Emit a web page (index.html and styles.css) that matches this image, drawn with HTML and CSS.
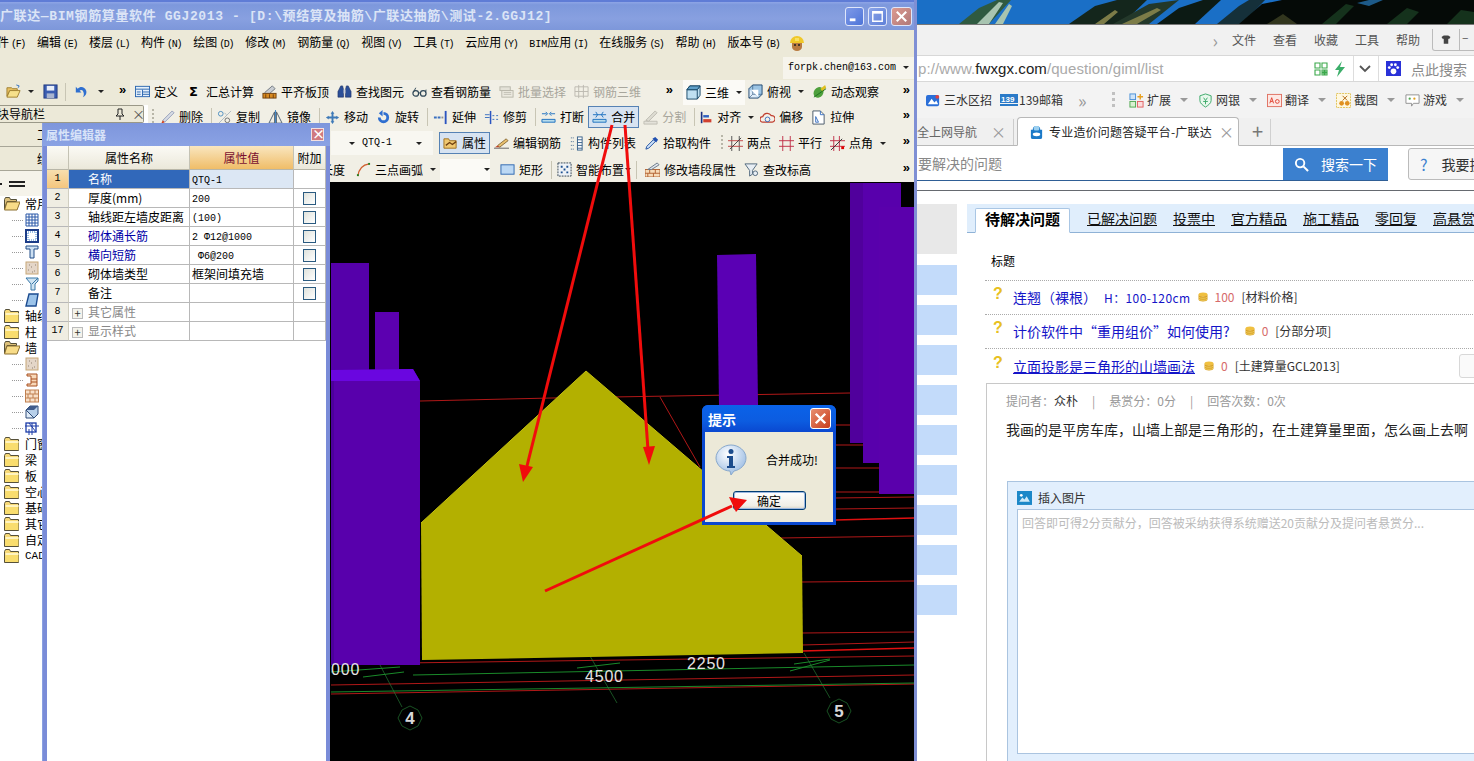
FILE: index.html
```html
<!DOCTYPE html>
<html lang="zh-CN">
<head>
<meta charset="utf-8">
<title>广联达 BIM钢筋算量软件 GGJ2013</title>
<link rel="stylesheet" href="styles.css">
</head>
<body>
<svg class="defs" aria-hidden="true">
  <symbol id="open" viewBox="0 0 16 16"><path d="M1 4h5l1 1h5v2H4L1 13z" fill="#e8c060" stroke="#a08030"/><path d="M4 7h11l-3 7H1z" fill="#f6e08a" stroke="#a08030"/><path d="M11 1l3 1-1 2" fill="none" stroke="#3070c0"/></symbol>
  <symbol id="save" viewBox="0 0 16 16"><rect x="1" y="1" width="14" height="14" fill="#3a5cb0" stroke="#223a80"/><rect x="4" y="2" width="8" height="5" fill="#e8eefa"/><rect x="4" y="10" width="8" height="5" fill="#a8b4d0"/></symbol>
  <symbol id="undo" viewBox="0 0 16 16"><path d="M3 3v6h6L7 7c2-1.500 4-.5 4.500 3 .2 1-.2 3-1 4 3-1 4.500-4 3.500-7C12.500 3 8 2 5 5z" fill="#2f6fd0"/></symbol>
  <symbol id="def" viewBox="0 0 16 16"><rect x=".5" y="2.500" width="15" height="11" fill="#e6f0fb" stroke="#2c66b0"/><path d="M1 5.500h14M8 6v7M8 8.500h7M8 11h7M2 8.500h4M2 11h4" stroke="#2c66b0"/></symbol>
  <symbol id="flush" viewBox="0 0 16 16"><path d="M3 9l8-7 3 3-8 7z" fill="#c8ccd2" stroke="#707880"/><rect x="1" y="10" width="14" height="5" fill="#d88a20" stroke="#704010"/><path d="M4 11v4M8 11v4M12 11v4" stroke="#704010"/></symbol>
  <symbol id="binoc" viewBox="0 0 16 16"><path d="M2 6l2-4h2l1 4v8H1V8zM14 6l-2-4h-2L9 6v8h6V8z" fill="#2c4f98" stroke="#1c2f60" stroke-width=".6"/><rect x="7" y="6" width="2" height="4" fill="#c8d0e0"/></symbol>
  <symbol id="specs" viewBox="0 0 16 16"><circle cx="4" cy="10" r="3" fill="none" stroke="#304858" stroke-width="1.300"/><circle cx="12" cy="10" r="3" fill="none" stroke="#304858" stroke-width="1.300"/><path d="M7 9.500h2M1.500 9L4 4M14.500 9L15 6" stroke="#304858"/></symbol>
  <symbol id="batch" viewBox="0 0 16 16"><rect x="1" y="3" width="11" height="4" fill="#e4e2d8" stroke="#b8b6aa"/><rect x="3" y="7" width="12" height="7" fill="#eceae0" stroke="#b8b6aa"/><path d="M5 9h8M5 11h8" stroke="#c0beb2"/></symbol>
  <symbol id="grid3d" viewBox="0 0 16 16"><path d="M1 3h14v10H1zM5 1v14M10 1v14M1 8h14" fill="none" stroke="#bcbab0"/></symbol>
  <symbol id="cube" viewBox="0 0 16 16"><path d="M1 5l3-4h11v10l-3 4H1z" fill="#bfe0f2" stroke="#184868"/><path d="M1 5h11v10M12 5l3-4" fill="none" stroke="#184868"/><path d="M1 5l3-4h11l-3 4z" fill="#5f9fc8" stroke="#184868"/></symbol>
  <symbol id="cubeglass" viewBox="0 0 16 16"><path d="M1 5h10v10H1z" fill="#e0eefa" stroke="#204870"/><path d="M1 5l4-4h10v10l-4 4" fill="#9cc4e4" stroke="#204870"/><path d="M5 1v10H15M1 15l4-4" fill="none" stroke="#204870" stroke-width=".6"/><path d="M3 6h8v8z" fill="#fff"/></symbol>
  <symbol id="orbit" viewBox="0 0 16 16"><ellipse cx="7" cy="9" rx="5" ry="6" fill="#4ea03c" transform="rotate(35 7 9)"/><path d="M9 5l5-4 1 3-4 4z" fill="#e0c020"/><path d="M2 14l13-9" stroke="#207020"/></symbol>
  <symbol id="pen" viewBox="0 0 16 16"><path d="M3 11L13 1l2 2L5 13z" fill="#d8dce4" stroke="#6070a0" stroke-width=".6"/><path d="M1 15l2-4 2 2z" fill="#d04020"/></symbol>
  <symbol id="copy" viewBox="0 0 16 16"><circle cx="4" cy="4" r="2.500" fill="none" stroke="#5090c0"/><circle cx="11" cy="11" r="2.500" fill="none" stroke="#707070"/><path d="M1 15L15 1M8 3l2 2" stroke="#90a0b0" stroke-width=".7"/></symbol>
  <symbol id="mirror" viewBox="0 0 16 16"><path d="M7 2v12H1zM9 2v12h6z" fill="none" stroke="#506070"/><path d="M8 0v16" stroke="#3a80c0"/></symbol>
  <symbol id="move" viewBox="0 0 16 16"><path d="M8 1l2 3H9v3h3V6l3 2-3 2V9H9v3h1l-2 3-2-3h1V9H4v1L1 8l3-2v1h3V4H6z" fill="#3f7ab8"/></symbol>
  <symbol id="rotate" viewBox="0 0 16 16"><path d="M8 2a6 6 0 1 1-6 6h3a3 3 0 1 0 3-3V2z" fill="#2f6fd0"/><path d="M7 0v7L3 3.500z" fill="#2f6fd0"/></symbol>
  <symbol id="extend" viewBox="0 0 16 16"><path d="M13.500 1v14" stroke="#2c55c0" stroke-width="2"/><path d="M1 8h3M5 8h3" stroke="#3a70c0" stroke-width="2"/><path d="M9 8h2" stroke="#909090" stroke-width="2"/></symbol>
  <symbol id="trim" viewBox="0 0 16 16"><path d="M7 1v14" stroke="#2c55c0" stroke-width="1.600"/><path d="M1 8h5M1 5h5M9 6h2M9 10h2M13 6h2M13 10h2" stroke="#3a70c0"/></symbol>
  <symbol id="breakb" viewBox="0 0 16 16"><path d="M1 4h5M10 4h5M5 2l2 2-2 2M11 2L9 4l2 2" fill="none" stroke="#1c70c0"/><path d="M1 10h14v3H1z" fill="#b8dcec" stroke="#1c70c0"/></symbol>
  <symbol id="merge" viewBox="0 0 16 16"><path d="M1 5h14M4 2l2 3-2 3M12 2l-2 3 2 3" fill="none" stroke="#1c70c0"/><path d="M1 10h14v3H1z" fill="#b8dcec" stroke="#1c70c0"/></symbol>
  <symbol id="splitg" viewBox="0 0 16 16"><path d="M1 12h14v3H1z" fill="#e4e2da" stroke="#c0beb4"/><path d="M3 11L13 1l2 2L6 12z" fill="#dedcd2" stroke="#bcbab0"/></symbol>
  <symbol id="alignl" viewBox="0 0 16 16"><path d="M2 1v14" stroke="#1c2f80" stroke-width="2"/><path d="M4 5h7v3H4z" fill="#3060c0"/><path d="M4 10h10v4H4z" fill="#d04030"/></symbol>
  <symbol id="offset" viewBox="0 0 16 16"><path d="M3 13a3 3 0 0 1 0-6 5 5 0 0 1 9-1 3.500 3.500 0 0 1 1 7z" fill="#f4f0e8" stroke="#c04030" stroke-width="1.300"/><circle cx="8" cy="10" r="2.500" fill="none" stroke="#3a70c0"/></symbol>
  <symbol id="stretch" viewBox="0 0 16 16"><path d="M2 1h8l4 4v10H2z" fill="#fff" stroke="#485868"/><path d="M5 7l3 6h-3zM10 1v4h4" fill="none" stroke="#3a70c0"/></symbol>
  <symbol id="prop" viewBox="0 0 16 16"><path d="M1 3h5l1 2h7v8H1z" fill="#f0c870" stroke="#a07020"/><path d="M3 10l4-3 3 2 4-3" fill="none" stroke="#704010" stroke-width="1.400"/></symbol>
  <symbol id="pencil" viewBox="0 0 16 16"><path d="M0 13h16" stroke="#606060"/><path d="M4 10l9-7 2 2-9 7z" fill="#e8c070" stroke="#604010" stroke-width=".7"/><path d="M1 12l3-2 2 2z" fill="#c04020"/></symbol>
  <symbol id="listb" viewBox="0 0 16 16"><rect x="9" y="1" width="5" height="14" fill="#fff" stroke="#38608a"/><path d="M9 4h5M9 7h5M9 10h5M9 13h5" stroke="#38608a"/><path d="M2 2h4M2 6h4M2 10h4M2 14h4" stroke="#38608a" stroke-dasharray="1 1"/></symbol>
  <symbol id="dropper" viewBox="0 0 16 16"><path d="M2 14l1-3 7-7 2 2-7 7z" fill="#cce0f8" stroke="#2050a0"/><path d="M9 3l3-2 3 3-2 3z" fill="#2050b0"/></symbol>
  <symbol id="twopt" viewBox="0 0 16 16"><path d="M4 0v16M12 0v16" stroke="#505050"/><path d="M0 5h16M0 11h16" stroke="#c04848"/><path d="M2 14L14 2" stroke="#404040"/></symbol>
  <symbol id="para" viewBox="0 0 16 16"><path d="M4 0v16M12 0v16M0 5h16M0 11h16" stroke="#c03048"/></symbol>
  <symbol id="ang" viewBox="0 0 16 16"><path d="M4 0v16M10 0v16M0 5h16M0 11h16" stroke="#c03048"/><path d="M1 15L13 3" stroke="#303030"/><rect x="12" y="11" width="3" height="3" fill="#e00000"/></symbol>
  <symbol id="arc" viewBox="0 0 16 16"><path d="M2 15C3 7 7 3 14 2" fill="none" stroke="#d06030" stroke-width="1.500"/><rect x="1" y="13" width="2" height="2" fill="#208020"/><rect x="13" y="1" width="2" height="2" fill="#208020"/></symbol>
  <symbol id="rect" viewBox="0 0 16 16"><rect x="1" y="3" width="14" height="10" fill="#bcd8f4" stroke="#2c66b0"/></symbol>
  <symbol id="smart" viewBox="0 0 16 16"><rect x="1" y="1" width="14" height="14" fill="#eef2f6" stroke="#304050" stroke-dasharray="2 1"/><path d="M4 4h2v2H4zM10 4h2v2h-2zM4 10h2v2H4zM10 10h2v2h-2zM7 7h2v2H7z" fill="#1c5090"/></symbol>
  <symbol id="wall" viewBox="0 0 16 16"><path d="M0 8h16v8H0z" fill="#f8dcb8" stroke="#b06030"/><path d="M0 12h16M5 8v4M11 8v4M3 12v4M9 12v4" stroke="#b06030"/><path d="M3 8L13 1l2 2L7 8z" fill="#dfe4ea" stroke="#6a7888"/></symbol>
  <symbol id="elev" viewBox="0 0 16 16"><path d="M1 2h13L9 9v4l-3 2V9z" fill="#e8eef4" stroke="#50687c"/><circle cx="12" cy="12" r="2.500" fill="#e8eef4" stroke="#50687c"/></symbol>
  <symbol id="folder" viewBox="0 0 16 14"><path d="M.5 2.500l1-2h4l1 2h8v11H.5z" fill="#f7d977" stroke="#55503a"/><rect x="1.500" y="4" width="13" height="9" fill="#f9dd6e"/><rect x="1.500" y="4" width="13" height="2" fill="#fff4c0"/></symbol>
  <symbol id="folderopen" viewBox="0 0 16 14"><path d="M.5 2.500l1-2h4l1 2h6v2H3L.5 12z" fill="#dcc07a" stroke="#55503a"/><path d="M3 5h13l-3 8H.5z" fill="#f8dc88" stroke="#8c7030"/></symbol>
  <symbol id="t1" viewBox="0 0 14 14"><path d="M1 1h12v12H1zM4 1v12M7 1v12M10 1v12M1 4h12M1 7h12M1 10h12" fill="none" stroke="#2a58a8"/></symbol>
  <symbol id="t2" viewBox="0 0 14 14"><rect x="1" y="1" width="12" height="12" fill="none" stroke="#1c3c88" stroke-width="2"/><path d="M3 3h8v8H3z" fill="none" stroke="#3880c8" stroke-dasharray="1 1"/></symbol>
  <symbol id="t3" viewBox="0 0 14 14"><path d="M1 1h12v3H9v9H5V4H1z" fill="#cde0f2" stroke="#204c88"/></symbol>
  <symbol id="t4" viewBox="0 0 14 14"><rect x="1" y="1" width="12" height="12" fill="#e4d6c8" stroke="#c8a878"/><path d="M3 9h1M6 6h1M9 10h1M4 4h1M10 4h1M7 11h1" stroke="#908070"/></symbol>
  <symbol id="t5" viewBox="0 0 14 14"><path d="M1 1h12v3L10 7v6H6V7z" fill="#cfe4f2" stroke="#3878a8"/><path d="M7 7l6-6" stroke="#3878a8"/></symbol>
  <symbol id="t6" viewBox="0 0 14 14"><path d="M4 1h9l-2 12H1z" fill="#9cc4ea" stroke="#1c4c90" stroke-width="1.400"/></symbol>
  <symbol id="w2" viewBox="0 0 14 14"><path d="M2 1h10v12H2v-2h4V3H2z" fill="#f8d8b8" stroke="#a85020"/><path d="M6 6h6M6 9h6" stroke="#a85020"/></symbol>
  <symbol id="w3" viewBox="0 0 14 14"><rect x=".5" y="1" width="13" height="12" fill="#f8e0c8" stroke="#c08050"/><path d="M1 5h12M1 9h12M5 1v4M10 1v4M3 5v4M8 5v4M5 9v4M10 9v4" stroke="#c08050"/></symbol>
  <symbol id="w4" viewBox="0 0 14 14"><path d="M1 5h8v8H1z" fill="#e0ecf8" stroke="#304c78"/><path d="M1 5l4-4h8v8l-4 4z" fill="#b8d0ea" stroke="#304c78"/><path d="M1 5l4-4h8L9 5z" fill="#405c8c"/></symbol>
  <symbol id="w5" viewBox="0 0 14 14"><rect x="1" y="2" width="10" height="9" fill="none" stroke="#1c3ca8" stroke-width="1.300"/><path d="M0 5h14M7 2v12M4 2l7 9M4 14V8" stroke="#1c3ca8"/></symbol>
  <symbol id="coin" viewBox="0 0 10 10"><ellipse cx="5" cy="2.500" rx="4.500" ry="2" fill="#f0c040"/><path d="M.5 2.500v5c0 1.200 2 2 4.500 2s4.500-.8 4.500-2v-5c0 1.200-2 2-4.500 2s-4.500-.8-4.500-2z" fill="#d8a020"/><path d="M1 5.500c1 1 7 1 8 0M1 7.500c1 1 7 1 8 0" stroke="#f8e080" fill="none" stroke-width=".7"/></symbol>
</svg>

<div class="desktop">
  <svg class="wallpaper" viewBox="0 0 557 24" preserveAspectRatio="none" aria-hidden="true">
    <rect width="557" height="24" fill="#1a6fc6"/>
    <path d="M42 24L62 8 80 0h14L72 24z" fill="#2f5a40"/><path d="M60 24L82 2l4 1L72 24zM78 24L92 4l3 2-9 18z" fill="#a8c4b0"/>
    <path d="M152 24L178 6 200 0h30L205 24z" fill="#14261c"/><path d="M196 24L232 4 262 0l-30 24z" fill="#23382a"/><path d="M205 24L240 8l4 2-24 14zM178 24l20-14 3 2-14 12z" fill="#7c7c48"/>
    <path d="M240 24L262 8l24-8h18l-26 24z" fill="#0c1a14"/><path d="M300 24L322 6 332 0h16L325 24z" fill="#15303a"/>
    <path d="M322 24L345 4 365 0h192v24z" fill="#050a07"/><path d="M405 24l24-20 8 2-18 18zM470 24l20-16 12 4-12 12zM530 24l14-14 13 2v12z" fill="#15321c"/><path d="M350 24l16-10 14 10z" fill="#32361e"/><path d="M440 3l12-3h14l-14 6z" fill="#1d5a88"/>
  </svg>

  <section class="browser">
    <div class="b-menu">
      <span class="b-more">›</span><span>文件</span><span>查看</span><span>收藏</span><span>工具</span><span>帮助</span>
      <span class="b-skin"><svg class="ic" viewBox="0 0 16 16"><path d="M2 4l3-2h6l3 2-2 3-1-1v7H5V6L4 7z" fill="#444"/></svg></span>
      <span class="b-min">–</span>
    </div>
    <div class="b-addr">
      <span class="b-url">p://www.<b>fwxgx.com</b>/question/giml/list</span>
      <svg class="b-qr" viewBox="0 0 14 14"><path d="M1 1h5v5H1zM8 1h5v5H8zM1 8h5v5H1zM8 8h2v2H8zM11 8h2v2h-2zM8 11h2v2H8zM11 11h2v2h-2z" fill="none" stroke="#3aa84a" stroke-width="1.100"/></svg>
      <svg class="b-bolt" viewBox="0 0 12 16"><path d="M8 0L1 9h4l-2 7 8-10H6z" fill="#3cae6a"/></svg>
      <span class="b-vsep"></span>
      <svg class="b-chev" viewBox="0 0 12 8"><path d="M1 1l5 5 5-5" fill="none" stroke="#555" stroke-width="1.800"/></svg>
      <span class="b-vsep"></span>
      <svg class="b-paw" viewBox="0 0 16 16"><rect width="16" height="16" fill="#2a32d8"/><circle cx="8" cy="11" r="3" fill="#fff"/><circle cx="3.500" cy="7" r="1.500" fill="#fff"/><circle cx="12.500" cy="7" r="1.500" fill="#fff"/><circle cx="6" cy="4" r="1.500" fill="#fff"/><circle cx="10" cy="4" r="1.500" fill="#fff"/></svg>
      <span class="b-search">点此搜索</span>
    </div>
    <div class="b-fav">
      <span class="fav first"><svg class="ic" viewBox="0 0 16 16"><rect y="2" width="14" height="12" rx="2" fill="#2b6fd8"/><path d="M2 12l4-6 3 4 2-2 2 4z" fill="#fff"/><circle cx="12" cy="4" r="2" fill="#e04040"/></svg>三水区招</span>
      <span class="fav mail"><svg class="ic wide" viewBox="0 0 18 14"><rect y="1" width="18" height="9" fill="#2a7ac8"/><rect y="11" width="18" height="2" fill="#2a7ac8"/><text x="1" y="9" class="fav-num">139</text></svg>139邮箱</span>
      <span class="b-chevrons">»</span>
      <span class="dots"></span>
      <span class="fav w-caret"><svg class="ic" viewBox="0 0 16 16"><rect x="1" y="1" width="6" height="6" fill="#cfe4f8" stroke="#4a90d8"/><rect x="1" y="9" width="6" height="6" fill="#d8f0d0" stroke="#50a850"/><rect x="9" y="9" width="6" height="6" fill="#fcdcdc" stroke="#e06060"/><path d="M12 1v6M9 4h6" stroke="#e8a020" stroke-width="1.500"/></svg>扩展</span><i class="b-caret"></i>
      <span class="fav w-caret"><svg class="ic" viewBox="0 0 16 16"><path d="M8 1l6 2v5c0 3-3 5-6 7-3-2-6-4-6-7V3z" fill="#e8f8ec" stroke="#3aa868"/><path d="M6 5l2 3 2-3M5.500 9h5M8 8v4" stroke="#3aa868" fill="none"/></svg>网银</span><i class="b-caret"></i>
      <span class="fav w-caret"><svg class="ic" viewBox="0 0 16 16"><rect x=".5" y="1.500" width="15" height="13" fill="#fde8e4" stroke="#e07060"/><path d="M3 11l2-6 2 6M4 9h2" stroke="#e04030" fill="none"/><circle cx="11" cy="9" r="2" fill="none" stroke="#e04030"/></svg>翻译</span><i class="b-caret"></i>
      <span class="fav w-caret"><svg class="ic" viewBox="0 0 16 16"><rect x=".5" y=".5" width="15" height="15" fill="#fff8e0" stroke="#e0c050" stroke-dasharray="2 1"/><path d="M7 8l5-5M7 3l5 5" stroke="#b06810"/><circle cx="6" cy="11" r="2.500" fill="#e09020"/><circle cx="12" cy="11" r="2.500" fill="#e09020"/></svg>截图</span><i class="b-caret"></i>
      <span class="fav w-caret"><svg class="ic" viewBox="0 0 16 16"><path d="M1 2h14v9H9l-2 3v-3H1z" fill="#fff" stroke="#909090"/><circle cx="5" cy="6" r="1.200" fill="#50a850"/><circle cx="10" cy="6" r="1.200" fill="#e0a020"/></svg>游戏</span><i class="b-caret"></i>
    </div>
    <div class="b-tabs">
      <span class="b-tab off">全上网导航<i class="tab-x">×</i></span>
      <span class="b-tab on"><svg class="ic" viewBox="0 0 16 16"><path d="M4 6a4 4 0 0 1 8 0h2v8a2 2 0 0 1-2 2H4a2 2 0 0 1-2-2V6z" fill="#1c7ac8"/><rect x="5" y="2" width="6" height="5" rx="2" fill="#9cd0f0"/><ellipse cx="8" cy="11" rx="4" ry="2" fill="#fff"/></svg><span class="tab-label">专业造价问题答疑平台-广联达</span><i class="tab-x">×</i></span>
      <span class="b-plus">+</span>
    </div>
    <div class="page">
      <div class="p-search">
        <span class="p-input">要解决的问题</span>
        <span class="p-btn"><svg class="ic" viewBox="0 0 16 16"><circle cx="6.500" cy="6.500" r="4.500" fill="none" stroke="#fff" stroke-width="2"/><path d="M10 10l5 5" stroke="#fff" stroke-width="2.200"/></svg>搜索一下</span>
        <span class="p-ask"><b>?</b>我要提问</span>
      </div>
      <div class="p-body">
        <aside class="p-side">
          <span class="side-top"></span>
          <span class="side-b"></span><span class="side-b"></span><span class="side-b"></span><span class="side-b"></span><span class="side-b"></span><span class="side-b"></span><span class="side-b"></span><span class="side-b"></span><span class="side-b"></span>
        </aside>
        <main class="p-main">
          <nav class="p-tabs">
            <span class="p-tab-on">待解决问题</span><a>已解决问题</a><a>投票中</a><a>官方精品</a><a>施工精品</a><a>零回复</a><a>高悬赏</a>
          </nav>
          <div class="q-head">标题</div>
          <div class="q-row"><b class="q-mark">?</b><a class="q-link">连翘（裸根）<span class="q-sm">H：100-120cm</span></a><svg class="coin" viewBox="0 0 10 10"><use href="#coin"/></svg><span class="q-score">100</span><span class="q-cat">[材料价格]</span></div>
          <div class="q-row"><b class="q-mark">?</b><a class="q-link">计价软件中“重用组价”如何使用?</a><svg class="coin gap" viewBox="0 0 10 10"><use href="#coin"/></svg><span class="q-score">0</span><span class="q-cat">[分部分项]</span></div>
          <div class="q-row last"><b class="q-mark">?</b><a class="q-link under">立面投影是三角形的山墙画法</a><svg class="coin" viewBox="0 0 10 10"><use href="#coin"/></svg><span class="q-score">0</span><span class="q-cat">[土建算量GCL2013]</span><span class="q-side"></span></div>
          <div class="ans">
            <div class="ans-meta"><span>提问者：<em>众朴</em></span><i>|</i><span>悬赏分：0分</span><i>|</i><span>回答次数：0次</span></div>
            <p class="ans-text">我画的是平房车库，山墙上部是三角形的，在土建算量里面，怎么画上去啊</p>
            <div class="reply">
              <div class="reply-head"><svg class="ic" viewBox="0 0 14 14"><rect width="14" height="13" fill="#1c88c8"/><path d="M2 10l3-4 2 2 2-3 3 5z" fill="#cfeaf8"/><circle cx="4" cy="4" r="1.300" fill="#fff"/></svg>插入图片</div>
              <div class="reply-area">回答即可得2分贡献分，回答被采纳获得系统赠送20贡献分及提问者悬赏分...</div>
            </div>
          </div>
        </main>
      </div>
    </div>
  </section>

  <section class="app">
    <header class="a-title">
      <span class="a-title-text">广联达—BIM钢筋算量软件 GGJ2013 - [D:\预结算及抽筋\广联达抽筋\测试-2.GGJ12]</span>
      <span class="a-ctrl min"><svg viewBox="0 0 18 18"><rect x="4" y="11" width="6" height="3" fill="#fff"/></svg></span>
      <span class="a-ctrl"><svg viewBox="0 0 18 18"><path d="M4 4h10v10H4z" fill="none" stroke="#fff" stroke-width="1.500"/><path d="M4 5h10" stroke="#fff" stroke-width="2"/></svg></span>
      <span class="a-ctrl close"><svg viewBox="0 0 18 18"><path d="M4 4l10 10M14 4L4 14" stroke="#fff" stroke-width="2.200"/></svg></span>
    </header>
    <nav class="a-menu">
      <span class="m-first">件<u>(F)</u></span><span>编辑<u>(E)</u></span><span>楼层<u>(L)</u></span><span>构件<u>(N)</u></span><span>绘图<u>(D)</u></span><span>修改<u>(M)</u></span><span>钢筋量<u>(Q)</u></span><span>视图<u>(V)</u></span><span>工具<u>(T)</u></span><span>云应用<u>(Y)</u></span><span><tt>BIM</tt>应用<u>(I)</u></span><span>在线服务<u>(S)</u></span><span>帮助<u>(H)</u></span><span>版本号<u>(B)</u></span>
      <svg class="a-face" viewBox="0 0 16 16"><path d="M1 8a7 7 0 0 1 14 0z" fill="#f0c828"/><path d="M6 3h4v3H6z" fill="#f8e060"/><path d="M3 8h10v4a5 4 0 0 1-10 0z" fill="#b87a40"/><circle cx="6" cy="10" r="1" fill="#222"/><circle cx="10" cy="10" r="1" fill="#222"/></svg>
    </nav>
    <div class="a-user"><span class="a-user-box">forpk.chen@163.com<i class="caret"></i></span></div>
    <div class="a-row3">
      <div class="band band-a">
        <svg class="ic wide1"><use href="#open"/></svg><i class="caret c1"></i><svg class="ic"><use href="#save"/></svg><span class="sep s2"></span><svg class="ic"><use href="#undo"/></svg><i class="caret c2"></i><span class="more">»</span>
      </div>
      <div class="band band-b">
        <span class="tool mr11"><svg class="ic"><use href="#def"/></svg>定义</span>
        <span class="tool"><span class="sigma">Σ</span>汇总计算</span>
        <span class="tool"><svg class="ic"><use href="#flush"/></svg>平齐板顶</span>
        <span class="tool"><svg class="ic"><use href="#binoc"/></svg>查找图元</span>
        <span class="tool"><svg class="ic"><use href="#specs"/></svg>查看钢筋量</span>
        <span class="tool dis"><svg class="ic"><use href="#batch"/></svg>批量选择</span>
        <span class="tool dis"><svg class="ic"><use href="#grid3d"/></svg>钢筋三维</span>
        <span class="more push">»</span>
      </div>
      <div class="band band-c">
        <span class="tool on-white"><svg class="ic"><use href="#cube"/></svg>三维<i class="caret"></i></span>
        <span class="tool"><svg class="ic"><use href="#cubeglass"/></svg>俯视<i class="caret"></i></span>
        <span class="tool"><svg class="ic"><use href="#orbit"/></svg>动态观察</span>
        <span class="more push">»</span>
      </div>
    </div>
    <div class="a-lower">
      <aside class="nav">
        <div class="nav-title"><span class="nav-name">模块导航栏</span><svg class="nav-pin" viewBox="0 0 10 12"><path d="M3 1h4v5l2 2H1l2-2zM5 8v4" fill="none" stroke="#222"/></svg><span class="nav-x">×</span></div>
        <div class="nav-tab">工程设置</div>
        <div class="nav-tab">绘图输入</div>
        <div class="nav-tools"><span class="nt-a"></span><span class="nt-b"></span></div>
        <ul class="tree">
          <li><svg class="fo"><use href="#folderopen"/></svg>常用构件类型</li>
          <li class="sub"><svg class="ti"><use href="#t1"/></svg></li>
          <li class="sub"><svg class="ti"><use href="#t2"/></svg></li>
          <li class="sub"><svg class="ti"><use href="#t3"/></svg></li>
          <li class="sub"><svg class="ti"><use href="#t4"/></svg></li>
          <li class="sub"><svg class="ti"><use href="#t5"/></svg></li>
          <li class="sub"><svg class="ti"><use href="#t6"/></svg></li>
          <li><svg class="fo"><use href="#folder"/></svg>轴线</li>
          <li><svg class="fo"><use href="#folder"/></svg>柱</li>
          <li><svg class="fo"><use href="#folderopen"/></svg>墙</li>
          <li class="sub"><svg class="ti"><use href="#t4"/></svg></li>
          <li class="sub"><svg class="ti"><use href="#w2"/></svg></li>
          <li class="sub"><svg class="ti"><use href="#w3"/></svg></li>
          <li class="sub"><svg class="ti"><use href="#w4"/></svg></li>
          <li class="sub"><svg class="ti"><use href="#w5"/></svg></li>
          <li><svg class="fo"><use href="#folder"/></svg>门窗洞</li>
          <li><svg class="fo"><use href="#folder"/></svg>梁</li>
          <li><svg class="fo"><use href="#folder"/></svg>板</li>
          <li><svg class="fo"><use href="#folder"/></svg>空心楼盖</li>
          <li><svg class="fo"><use href="#folder"/></svg>基础</li>
          <li><svg class="fo"><use href="#folder"/></svg>其它</li>
          <li><svg class="fo"><use href="#folder"/></svg>自定义</li>
          <li><svg class="fo"><use href="#folder"/></svg><span class="cad">CAD识别</span></li>
        </ul>
      </aside>
      <div class="work">
        <div class="row r4">
          <span class="grip"></span>
          <span class="tool first4"><svg class="ic"><use href="#pen"/></svg>删除</span><span class="sep"></span>
          <span class="tool"><svg class="ic"><use href="#copy"/></svg>复制</span>
          <span class="tool"><svg class="ic"><use href="#mirror"/></svg>镜像</span><span class="sep"></span>
          <span class="tool"><svg class="ic"><use href="#move"/></svg>移动</span>
          <span class="tool"><svg class="ic"><use href="#rotate"/></svg>旋转</span><span class="sep"></span>
          <span class="tool"><svg class="ic"><use href="#extend"/></svg>延伸</span>
          <span class="tool"><svg class="ic"><use href="#trim"/></svg>修剪</span><span class="sep"></span>
          <span class="tool"><svg class="ic"><use href="#breakb"/></svg>打断</span>
          <span class="tool active merge"><svg class="ic"><use href="#merge"/></svg>合并</span>
          <span class="tool dis"><svg class="ic"><use href="#splitg"/></svg>分割</span><span class="sep"></span>
          <span class="tool t-align"><svg class="ic"><use href="#alignl"/></svg>对齐<i class="caret"></i></span>
          <span class="tool"><svg class="ic"><use href="#offset"/></svg>偏移</span>
          <span class="tool"><svg class="ic"><use href="#stretch"/></svg>拉伸</span>
          <span class="more push">»</span>
        </div>
        <div class="row r5">
          <span class="combo"><i class="caret"></i><span class="mono">QTQ-1</span><i class="caret end"></i></span>
          <span class="tool active prop"><svg class="ic"><use href="#prop"/></svg>属性</span>
          <span class="tool"><svg class="ic"><use href="#pencil"/></svg>编辑钢筋</span>
          <span class="tool"><svg class="ic"><use href="#listb"/></svg>构件列表</span>
          <span class="tool"><svg class="ic"><use href="#dropper"/></svg>拾取构件</span>
          <span class="grip g5"></span>
          <span class="tool"><svg class="ic"><use href="#twopt"/></svg>两点</span>
          <span class="tool"><svg class="ic"><use href="#para"/></svg>平行</span>
          <span class="tool"><svg class="ic"><use href="#ang"/></svg>点角<i class="caret"></i></span>
          <span class="more push">»</span>
        </div>
        <div class="row r6">
          <span class="len">长度</span>
          <span class="tool t-arc"><svg class="ic"><use href="#arc"/></svg>三点画弧<i class="caret"></i></span>
          <span class="inp"><i class="caret"></i></span>
          <span class="tool"><svg class="ic"><use href="#rect"/></svg>矩形</span><span class="sep"></span>
          <span class="tool t-smart"><svg class="ic"><use href="#smart"/></svg>智能布置<i class="caret"></i></span><span class="sep s6"></span>
          <span class="tool"><svg class="ic"><use href="#wall"/></svg>修改墙段属性</span>
          <span class="tool"><svg class="ic"><use href="#elev"/></svg>查改标高</span>
          <span class="more push">»</span>
        </div>
        <svg class="canvas" viewBox="148 182 766 579" aria-label="三维视图">
          <rect x="148" y="182" width="766" height="579" fill="#000"/>
          <g class="l-red">
            <path d="M420 401L552 398L850 393"/><path d="M660 397L700 467"/>
            <path d="M835 425H852"/><path d="M835 445H864"/><path d="M835 468H880"/><path d="M835 492H914"/><path d="M835 498L914 497"/><path d="M835 509L914 508"/><path d="M835 520L914 518" class="thick"/><path d="M780 538L914 536"/>
            <path d="M802 582L914 581"/><path d="M802 633L914 632"/><path d="M802 645L914 642"/><path d="M802 651L914 648" class="thick"/>
            <path d="M331 664L914 656"/><path d="M331 685L914 675"/><path d="M331 694L914 684"/>
          </g>
          <g class="l-green">
            <path d="M413 675L914 665"/><path d="M331 692L914 683"/><path d="M331 672L400 667"/><path d="M363 677L404 672"/><path d="M577 668L620 663"/><path d="M790 671L830 660"/><path d="M794 664L830 659"/>
            <path d="M380 665L402 707" class="thin"/><path d="M590 656L617 703" class="thin"/><path d="M804 653L830 698" class="thin"/>
            <polygon class="thin" points="410,706 418,710 422,718 418,726 410,730 402,726 398,718 402,710"/>
            <polygon class="thin" points="839,699 847,703 851,711 847,719 839,723 831,719 827,711 831,703"/>
          </g>
          <polygon points="421,523 586,371 802,556 803,653 422,660" fill="#b3b000"/>
          <path d="M421 523L586 371L802 556" fill="none" stroke="#c2bf10"/>
          <rect x="331" y="263" width="38" height="108" fill="#5500aa"/>
          <rect x="375" y="312" width="24" height="60" fill="#5c00b0"/>
          <polygon points="331,370 413,369 420,381 420,665 331,665" fill="#5800ac"/>
          <polygon points="331,370 413,369 420,381 331,381" fill="#6a06e0"/>
          <rect x="331" y="381" width="3" height="284" fill="#4c009c"/>
          <polygon points="717,255 756,254 758,405 719,405" fill="#5a00b4"/>
          <rect x="850" y="183" width="14" height="260" fill="#50009c"/>
          <rect x="863" y="183" width="38" height="280" fill="#5800ac"/>
          <rect x="879" y="207" width="35" height="287" fill="#5a00ac"/>
          <text x="331" y="675" class="dim">000</text>
          <text x="585" y="682" class="dim">4500</text>
          <text x="687" y="669" class="dim">2250</text>
          <text x="410" y="724" class="axis">4</text>
          <text x="839" y="717" class="axis">5</text>
        </svg>
      </div>
    </div>

    <div class="editor">
      <div class="ed-title"><span>属性编辑器</span><i class="ed-x">×</i></div>
      <table class="ed-table">
        <colgroup><col class="c-n"><col class="c-k"><col class="c-v"><col class="c-a"></colgroup>
        <thead><tr><th></th><th>属性名称</th><th class="th-v">属性值</th><th>附加</th></tr></thead>
        <tbody>
          <tr class="sel"><td class="idx">1</td><td class="k">名称</td><td class="v"><span class="mono">QTQ-1</span></td><td></td></tr>
          <tr><td class="idx">2</td><td class="k">厚度(mm)</td><td class="v"><span class="mono">200</span></td><td class="a"><i class="chk"></i></td></tr>
          <tr><td class="idx">3</td><td class="k">轴线距左墙皮距离</td><td class="v"><span class="mono">(100)</span></td><td class="a"><i class="chk"></i></td></tr>
          <tr><td class="idx">4</td><td class="k blue">砌体通长筋</td><td class="v"><span class="mono">2 Φ12@1000</span></td><td class="a"><i class="chk"></i></td></tr>
          <tr><td class="idx">5</td><td class="k blue">横向短筋</td><td class="v"><span class="mono">&nbsp;Φ6@200</span></td><td class="a"><i class="chk"></i></td></tr>
          <tr><td class="idx">6</td><td class="k">砌体墙类型</td><td class="v">框架间填充墙</td><td class="a"><i class="chk"></i></td></tr>
          <tr><td class="idx">7</td><td class="k">备注</td><td class="v"></td><td class="a"><i class="chk"></i></td></tr>
          <tr class="grp"><td class="idx">8</td><td class="k"><i class="plus">+</i>其它属性</td><td></td><td></td></tr>
          <tr class="grp"><td class="idx">17</td><td class="k"><i class="plus">+</i>显示样式</td><td></td><td></td></tr>
        </tbody>
      </table>
    </div>

    <div class="dialog">
      <div class="dlg-title"><span>提示</span><i class="dlg-x"><svg viewBox="0 0 20 20"><path d="M5 5l10 10M15 5L5 15" stroke="#fff" stroke-width="2.600"/></svg></i></div>
      <div class="dlg-body">
        <div class="dlg-msg">
          <svg class="dlg-icon" viewBox="0 0 32 32"><defs><radialGradient id="gl" cx=".4" cy=".3" r=".8"><stop offset="0" stop-color="#ffffff"/><stop offset="1" stop-color="#8fb4e0"/></radialGradient></defs><path d="M16 1c8 0 15 6 15 13s-6 12-12 13l-3 4-1-4C8 27 1 21 1 14S8 1 16 1z" fill="url(#gl)" stroke="#88a8cc"/><circle cx="16" cy="7.500" r="2.500" fill="#1c4c8c"/><path d="M12 12h6v10h2v2h-8v-2h2v-8h-2z" fill="#1c4c8c"/></svg>
          <span>合并成功!</span>
        </div>
        <span class="dlg-btn">确定</span>
      </div>
    </div>

    <svg class="marks" viewBox="0 0 917 761" aria-hidden="true">
      <path d="M612 125L527 466" class="arrow"/><polygon points="523,482 519,464 533,467" class="head"/>
      <path d="M625 125L648 450" class="arrow"/><polygon points="649,465 643,447 655,446" class="head"/>
      <path d="M545 591L732 506" class="arrow"/><polygon points="747,500 729,497 736,512" class="head"/>
    </svg>
  </section>
</div>
</body>
</html>
```

FILE: styles.css
```css
* { box-sizing: border-box; }
html, body { margin: 0; padding: 0; }
body {
  width: 1474px;
  height: 761px;
  overflow: hidden;
  font-family: "Noto Sans CJK SC", "Liberation Sans", sans-serif;
  font-size: 12px;
  color: #000;
}
.defs { position: absolute; width: 0; height: 0; }
i { font-style: normal; }
em { font-style: normal; }
.desktop { position: relative; width: 1474px; height: 761px; overflow: hidden; background: #1a6fc6; }
.wallpaper { position: absolute; left: 917px; top: 0; width: 557px; height: 24px; }
.ic { display: block; width: 15px; height: 15px; flex: none; }
.mono { font-family: "Liberation Mono", "Noto Sans CJK SC", monospace; font-size: 10px; }

/* ---------- app window ---------- */
.app {
  position: absolute; left: 0; top: 0; width: 917px; height: 761px;
  display: flex; flex-direction: column;
  background: #ece9d8;
  border-right: 3px solid #7f8fd4;
  line-height: 16px;
}
.a-title {
  flex: none; height: 30px;
  display: flex; align-items: center;
  background: linear-gradient(#8ea5e6 0, #7d98dc 10%, #88a0e0 60%, #7d97da 100%);
  border-top: 2px solid #5f7cd6;
  padding-right: 1px;
}
.a-title-text {
  flex: 1; white-space: nowrap; overflow: hidden;
  font-family: "Liberation Mono", "Noto Sans CJK SC", monospace;
  font-size: 13px; font-weight: 700; letter-spacing: .62px;
  color: #dbe4f6; padding-top: 1px;
}
.a-ctrl {
  width: 19px; height: 19px; margin-left: 4px; flex: none;
  border: 1px solid #dfe6fa; border-radius: 3px;
  background: linear-gradient(135deg, #8aa4e8, #5f80d8);
}
.a-ctrl svg { display: block; width: 100%; height: 100%; }
.a-ctrl.min { background: linear-gradient(135deg, #7f9ae8, #4d74d8); }
.a-ctrl.close { width: 21px; background: linear-gradient(135deg, #dd9a90, #b07878); margin-right: 1px; }
.a-menu { flex: none; height: 25px; display: flex; align-items: center; gap: 12px; white-space: nowrap; padding-top: 1px; }
.m-first { margin-left: -3px; }
.a-menu u { text-decoration: none; font-family: "Liberation Mono", monospace; font-size: 10px; letter-spacing: -1.33px; margin-left: 2px; }
.a-menu tt { font-family: "Liberation Mono", monospace; font-size: 10px; }
.a-face { width: 16px; height: 16px; margin-left: -2px; flex: none; }
.a-user { flex: none; height: 25px; display: flex; justify-content: flex-end; align-items: center; }
.a-user-box {
  width: 131px; height: 22px; display: flex; align-items: center; padding-left: 5px;
  background: #f6f4ec;
  font-family: "Liberation Mono", monospace; font-size: 10px;
}
.a-user-box .caret { margin-left: 7px; }

.caret {
  display: inline-block; flex: none; width: 0; height: 0;
  border-left: 3px solid transparent; border-right: 3px solid transparent; border-top: 3px solid #222;
}
.tool { display: flex; align-items: center; gap: 4px; margin-right: 8px; white-space: nowrap; flex: none; }
.tool .caret { margin-left: 3px; }
.tool.dis { color: #a8a69c; }
.tool.active { background: #d7e3f1; border: 1px solid #5682b4; height: 22px; padding: 0 3px; }
.sep { flex: none; width: 1px; height: 18px; background: #c8c5b4; margin-right: 5px; }
.more { font-family: "Liberation Sans", sans-serif; font-size: 13px; font-weight: 700; line-height: 10px; height: 14px; }
.push { margin-left: auto; }

.a-row3 { flex: none; height: 25px; display: flex; }
.band { display: flex; align-items: center; height: 25px; padding-bottom: 2px; }
.band-a { width: 130px; padding-left: 5px; }
.band-b { width: 549px; padding-left: 5px; padding-right: 6px; background: #f1efe5; }
.band-c { flex: 1; padding-left: 4px; padding-right: 4px; background: #f1efe5; }
.wide1 { width: 17px; }
.c1 { margin: 0 9px 0 6px; }
.c2 { margin: 0 15px 0 10px; }
.s2 { margin: 0 7px; }
.mr11 { margin-right: 11px; }
.sigma { font-family: "DejaVu Sans", sans-serif; font-weight: 700; font-size: 13px; width: 13px; }
.on-white { background: #fbfaf6; height: 25px; padding-left: 3px; margin-right: 3px; width: 62px; margin-bottom: -2px; }

.a-lower { flex: 1; display: flex; min-height: 0; }

/* navigation panel */
.nav { flex: none; width: 148px; display: flex; flex-direction: column; overflow: hidden; background: #fff; }
.nav-title {
  flex: none; height: 18px; width: 144px; display: flex; align-items: center;
  background: #ece9d8; border: 1px solid #9a9888; border-left: none; border-radius: 0 2px 2px 0;
  overflow: hidden;
}
.nav-name { margin-left: -15px; flex: none; width: 130px; }
.nav-pin { width: 10px; height: 12px; flex: none; }
.nav-x { margin-left: 7px; color: #555; font-size: 13px; }
.nav-tab {
  flex: none; height: 24px; background: #ece9d8; border-bottom: 1px solid #a8a698;
  display: flex; align-items: center; padding-left: 37px; white-space: nowrap;
}
.nav-tools { flex: none; height: 25px; background: #f5f3ea; display: flex; gap: 4px; align-items: center; }
.nt-a { width: 2px; height: 2px; background: #222; }
.nt-b { width: 16px; height: 6px; border-top: 2px solid #222; border-bottom: 2px solid #222; margin-left: 3px; }
.tree { list-style: none; margin: 0; padding: 0; background: #fff; flex: 1; }
.tree li { height: 16px; display: flex; align-items: center; white-space: nowrap; padding-left: 4px; gap: 5px; }
.tree .sub { padding-left: 12px; gap: 0; background: repeating-linear-gradient(90deg, #999 0 1px, transparent 1px 2px) 12px 8px / 12px 1px no-repeat; }
.fo { width: 16px; height: 14px; flex: none; }
.ti { width: 14px; height: 14px; flex: none; margin-left: 13px; }
.cad { font-family: "Liberation Mono", "Noto Sans CJK SC", monospace; font-size: 11px; }

/* work area */
.work { flex: 1; min-width: 0; display: flex; flex-direction: column; }
.row { flex: none; display: flex; align-items: center; background: #f1efe5; padding-right: 4px; }
.r4 { height: 26px; padding-left: 4px; padding-bottom: 2px; }
.r5 { height: 26px; padding-left: 183px; padding-bottom: 2px; }
.r6 { height: 25px; padding-left: 173px; }
.grip { width: 2px; height: 16px; flex: none; background: repeating-linear-gradient(#b8b6a8 0 2px, transparent 2px 4px); }
.first4 { margin-left: 6px; }
.merge { margin-left: -4px; margin-right: 4px; }
.t-align { margin-right: 6px; }
.t-align .ic { width: 13px; }
.combo { width: 102px; height: 24px; display: flex; align-items: center; background: #f8f7f1; padding-left: 18px; margin-right: 6px; gap: 7px; flex: none; }
.combo .mono { width: 47px; }
.prop { margin-right: 4px; padding-right: 3px; }
.g5 { margin: 0 5px 0 2px; }
.len { width: 25px; margin-right: 10px; }
.t-arc { margin-right: 4px; }
.t-smart { margin-right: 5px; }
.t-smart .caret { margin-left: -3px; }
.inp { width: 50px; height: 22px; background: #fbfaf6; display: flex; justify-content: flex-end; align-items: center; margin-right: 10px; flex: none; }
.s6 { margin-right: 8px; }
.canvas { display: block; flex: 1; width: 766px; min-height: 0; }
.l-red path { fill: none; stroke: #b01818; stroke-width: 1; }
.l-red .thick { stroke: #e01010; stroke-width: 1.600; }
.l-green path { fill: none; stroke: #1a8a2a; stroke-width: 1; }
.l-green .thin { fill: none; stroke: #2a8a3a; stroke-width: .6; }
.dim { font-family: "Liberation Sans", sans-serif; font-size: 16px; fill: #e4e4e4; letter-spacing: .8px; }
.axis { font-family: "Liberation Sans", sans-serif; font-size: 17px; font-weight: 700; fill: #d8d8d8; text-anchor: middle; }

/* property editor */
.editor {
  position: absolute; left: 43px; top: 123px; width: 287px; height: 638px;
  background: #fff; border: solid #7a8cd8; border-width: 0 4px;
  box-shadow: -1px 0 0 #8aa0e0;
}
.ed-title {
  height: 23px; margin: 0 -4px; padding: 0 6px 0 3px;
  display: flex; align-items: center; justify-content: space-between;
  background: linear-gradient(#7e96dc, #8aa2e4);
  color: #d8e3f8; font-weight: 700;
}
.ed-x {
  width: 13px; height: 13px; background: #d07a80; border: 1px solid #f4e0e0; color: #fff;
  font-weight: 700; font-size: 13px; line-height: 10px; text-align: center;
}
.ed-table { border-collapse: separate; border-spacing: 0; table-layout: fixed; width: 279px; }
.c-n { width: 22px; } .c-k { width: 121px; } .c-v { width: 104px; } .c-a { width: 32px; }
.ed-table th {
  height: 24px; padding: 0; font-weight: 400; font-size: 12px;
  background: linear-gradient(#fbfaf5, #ebe8da);
  border-right: 1px solid #c4c2b4; border-bottom: 1px solid #b8b6a8;
}
.ed-table th.th-v { background: linear-gradient(#f9e6bf, #f0bd68); color: #7a1030; }
.ed-table td { height: 19px; padding: 0; border-right: 1px solid #b8b8b8; border-bottom: 1px solid #b8b8b8; line-height: 14px; white-space: nowrap; overflow: hidden; }
.ed-table .idx { background: #efede2; text-align: center; font-family: "Liberation Mono", monospace; font-size: 10px; border-right: 1px solid #d0cec0; }
.ed-table .k { padding-left: 19px; }
.ed-table .v { padding-left: 2px; }
.ed-table .sel .idx { background: linear-gradient(#f8dfae, #f4c67e); }
.ed-table .sel .k { background: #3168ba; color: #fff; }
.ed-table .sel .v { background: #dce7f4; }
.blue { color: #0000a8; }
.grp .k { color: #888; padding-left: 3px; }
.plus {
  display: inline-block; width: 11px; height: 11px; border: 1px solid #bbb; background: #f4f3ec; color: #333;
  font-size: 11px; line-height: 9px; text-align: center; margin-right: 5px; vertical-align: -1px;
}
.chk { display: block; width: 13px; height: 13px; margin: 0 auto; border: 1px solid #2a5a80; background: linear-gradient(135deg, #dfe2dc, #fff); }

/* message dialog */
.dialog {
  position: absolute; left: 702px; top: 405px; width: 134px; height: 120px;
  display: flex; flex-direction: column;
  background: #0a48d0; border-radius: 6px 6px 0 0; padding: 0 3px 3px;
}
.dlg-title {
  flex: none; height: 27px; display: flex; align-items: center; justify-content: space-between;
  color: #fff; font-weight: 700; font-size: 14px;
  margin: 0 -3px; padding: 0 5px 0 6px; border-radius: 6px 6px 0 0;
  background: linear-gradient(#0a62e8, #0c5ce0 60%, #0a48d0);
}
.dlg-x { width: 21px; height: 21px; border: 1px solid #fff; border-radius: 3px; background: linear-gradient(135deg, #e89070, #c83c1c); }
.dlg-x svg { display: block; width: 100%; height: 100%; }
.dlg-body { flex: 1; background: #ece9d8; display: flex; flex-direction: column; align-items: center; }
.dlg-msg { height: 59px; width: 100%; display: flex; align-items: center; padding: 0 0 3px 10px; }
.dlg-icon { width: 32px; height: 32px; flex: none; margin-right: 19px; }
.dlg-btn {
  width: 73px; height: 19px; display: flex; align-items: center; justify-content: center;
  border: 1px solid #003c74; border-radius: 3px; background: linear-gradient(#fff, #f0eee6 80%, #d8d4c8);
  box-shadow: inset 0 0 0 1px #9db8e0;
}
.marks { position: absolute; left: 0; top: 0; width: 917px; height: 761px; pointer-events: none; }
.arrow { stroke: #f00c0c; stroke-width: 3; fill: none; }
.head { fill: #f00c0c; }

/* ---------- browser window ---------- */
.browser {
  position: absolute; left: 917px; top: 24px; width: 557px; height: 737px;
  display: flex; flex-direction: column; overflow: hidden;
  background: #fff; line-height: 16px;
}
.b-menu {
  flex: none; height: 31px; display: flex; align-items: center; gap: 17px; justify-content: flex-end;
  background: #f1f1f1; border-top: 1px solid #777; color: #555; white-space: nowrap;
}
.b-more { font-size: 18px; color: #999; margin-right: -3px; }
.b-skin { width: 28px; height: 22px; margin-left: -5px; display: flex; align-items: center; justify-content: center; border: 1px solid #bbb; border-top: none; border-radius: 0 0 0 3px; }
.b-skin .ic { width: 12px; height: 12px; }
.b-min { width: 14px; margin-left: -17px; height: 22px; border-bottom: 1px solid #bbb; color: #555; padding-left: 2px; }
.b-addr {
  flex: none; height: 27px; display: flex; align-items: center; background: #fff;
  border-top: 1px solid #d8d8d8; border-bottom: 1px solid #d8d8d8;
}
.b-url { width: 397px; flex: none; padding-left: 1px; font-family: "Liberation Sans", sans-serif; font-size: 15px; letter-spacing: .08px; color: #aaa; white-space: nowrap; overflow: hidden; }
.b-url b { font-weight: 400; color: #222; }
.b-qr { width: 14px; height: 14px; flex: none; }
.b-bolt { width: 12px; height: 16px; margin-left: 6px; margin-right: 7px; flex: none; }
.b-vsep { width: 1px; height: 25px; background: #ddd; flex: none; }
.b-chev { width: 12px; height: 8px; margin: 0 7px 0 5px; flex: none; }
.b-paw { width: 15px; height: 15px; margin-left: 7px; margin-right: 10px; flex: none; }
.b-search { font-size: 14px; color: #8a8a8a; white-space: nowrap; }
.b-fav { flex: none; height: 36px; display: flex; align-items: center; background: #f3f3f3; white-space: nowrap; color: #333; padding-left: 9px; font-size: 12px; }
.fav { display: flex; align-items: center; gap: 3px; flex: none; margin-right: 8px; }
.fav .wide { width: 18px; height: 14px; }
.fav-num { font-family: "Liberation Sans", sans-serif; font-size: 8px; font-weight: 700; fill: #fff; }
.mail { gap: 1px; }
.b-chevrons { color: #999; font-size: 18px; margin-left: 7px; width: 37px; }
.dots { width: 3px; height: 16px; background: repeating-linear-gradient(#c0c0c0 0 3px, transparent 3px 6px); margin-right: 14px; flex: none; }
.w-caret { margin-right: 9px; }
.b-caret { width: 0; height: 0; flex: none; border-left: 4px solid transparent; border-right: 4px solid transparent; border-top: 4px solid #999; margin-right: 10px; }
.b-tabs { flex: none; height: 28px; display: flex; align-items: flex-end; background: #f0f0f0; border-bottom: 1px solid #b8b8b8; white-space: nowrap; }
.b-tab { display: flex; align-items: center; height: 28px; color: #444; flex: none; }
.b-tab.off { width: 97px; height: 26px; border-right: 1px solid #ccc; justify-content: space-between; padding-right: 7px; color: #666; }
.b-tab.on {
  width: 222px; margin-left: 3px; padding-left: 11px; gap: 5px; background: #fff; color: #222;
  border: 1px solid #b8b8b8; border-bottom: 1px solid #fff; border-radius: 4px 4px 0 0; margin-bottom: -1px; height: 29px;
}
.tab-label { width: 165px; letter-spacing: .2px; white-space: nowrap; }
.tab-x { color: #999; font-size: 15px; }
.b-plus { font-size: 20px; color: #777; margin-left: 6px; width: 26px; text-align: center; height: 26px; line-height: 24px; border-right: 1px solid #d0d0d0; }
.page { flex: 1; min-height: 0; display: flex; flex-direction: column; background: #fff; }
.p-search { flex: none; height: 45px; padding-top: 2px; display: flex; align-items: flex-start; border-bottom: 1px solid #666a70; overflow: hidden; }
.p-input { flex: none; width: 366px; height: 33px; border-bottom: 1px solid #2f5f96; padding: 6px 0 0 1px; font-size: 14px; line-height: 18px; color: #888; }
.p-btn { flex: none; width: 105px; height: 33px; display: flex; align-items: center; justify-content: center; gap: 12px; background: #3b80cf; color: #fff; font-size: 14px; border-bottom: 1px solid #2f5f96; }
.p-ask { flex: none; margin-left: 20px; width: 90px; height: 32px; display: flex; align-items: center; gap: 14px; padding-left: 11px; font-size: 14px; color: #333; border: 1px solid #bbb; border-radius: 3px; background: #f6f6f6; white-space: nowrap; }
.p-ask b { color: #3b80cf; font-weight: 400; font-size: 16px; }
.p-body { flex: 1; min-height: 0; display: flex; gap: 10px; }
.p-side { flex: none; width: 40px; padding-top: 13px; display: flex; flex-direction: column; gap: 10px; }
.side-top { height: 50px; background: #e8e8e8; margin-bottom: 1px; }
.side-b { height: 30px; background: #c3dbfa; flex: none; }
.p-main { flex: none; width: 640px; padding-top: 13px; }
.p-tabs {
  height: 29px; display: flex; align-items: flex-end; gap: 16px; background: #e0eefc; border-bottom: 1px solid #8fb2d6;
  padding-left: 8px; font-size: 14px; line-height: 20px;
}
.p-tabs a { color: #111; text-decoration: underline; margin-bottom: 4px; }
.p-tab-on {
  width: 95px; height: 25px; margin-right: 1px; margin-bottom: -1px; background: #fff; border: 1px solid #a9c6e4; border-bottom: 1px solid #fff;
  font-size: 15px; font-weight: 700; text-align: center; line-height: 20px; border-radius: 2px 2px 0 0;
}
.q-head { height: 48px; padding: 20px 0 0 6px; border-bottom: 1px dotted #aaa; margin-left: 18px; }
.q-row { height: 34px; margin-left: 18px; display: flex; align-items: center; border-bottom: 1px dotted #aaa; font-size: 14px; padding-bottom: 1px; white-space: nowrap; }
.q-row.last { border-bottom: none; }
.q-mark { width: 28px; padding-left: 8px; margin-top: -6px; color: #e8c020; font-size: 16px; font-family: "Liberation Sans", sans-serif; flex: none; }
.q-link { color: #1414c8; flex: none; }
.q-link.under { text-decoration: underline; margin-right: 2px; }
.q-sm { font-size: 12px; margin-left: 7px; letter-spacing: .4px; }
.coin { width: 10px; height: 10px; flex: none; margin-left: 7px; }
.coin.gap { margin-left: 15px; }
.q-score { color: #d66a6a; font-size: 12px; margin: 0 7px; }
.q-cat { color: #333; font-size: 12px; }
.q-side { width: 30px; height: 24px; margin-left: auto; margin-right: 118px; background: #fafafa; border: 1px solid #d8d8d8; border-radius: 3px; }
.ans { margin-left: 19px; border: 1px solid #c8c8c8; border-bottom: none; height: 400px; padding-left: 19px; }
.ans-meta { display: flex; gap: 14px; height: 34px; align-items: center; color: #999; }
.ans-meta em { color: #333; }
.ans-text { margin: 0; height: 46px; font-size: 14px; line-height: 22px; color: #222; }
.reply { margin-top: 17px; margin-left: 1px; height: 300px; background: #e2effd; border: 1px solid #aac4e0; padding-left: 9px; }
.reply-head { height: 27px; padding-top: 5px; display: flex; align-items: center; gap: 6px; color: #333; }
.reply-area { height: 245px; background: #fff; border: 1px solid #aac4e0; padding: 5px 0 0 4px; color: #bbb; white-space: nowrap; }
```
